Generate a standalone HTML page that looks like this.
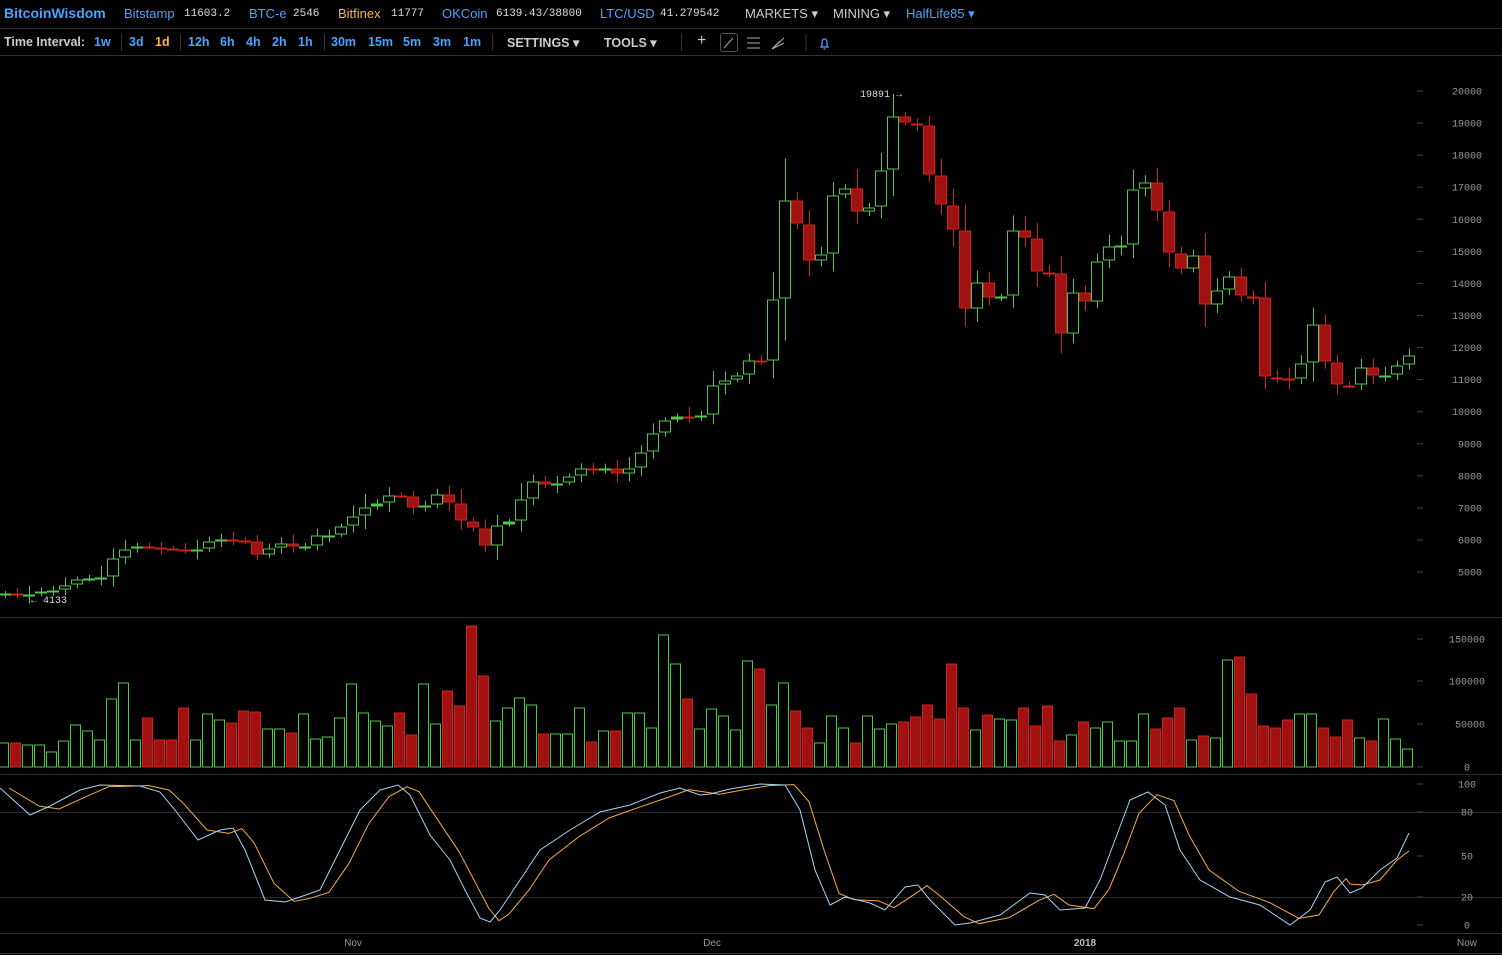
<!DOCTYPE html>
<html><head><meta charset="utf-8">
<style>
html,body{margin:0;padding:0;background:#000;width:1502px;height:955px;overflow:hidden;font-family:"Liberation Sans",sans-serif}
#top{position:absolute;left:0;top:0;width:1502px;height:28px;border-bottom:1px solid #333;font-size:13px;white-space:nowrap}
#top span{position:absolute;top:6px}
.b{color:#4aa3ff}.o{color:#ffb347}.w{color:#ccc}.m{font-family:"Liberation Mono",monospace;font-size:11px;color:#ddd;top:8px!important}
#bar{position:absolute;left:0;top:29px;width:1502px;height:26px;border-bottom:1px solid #333;font-size:12.5px;font-weight:bold;white-space:nowrap}
#bar span{position:absolute;top:6px}
.sep{position:absolute;top:5px;width:1px;height:17px;background:#333}
svg{position:absolute;left:0;top:0}
</style></head><body>
<div id="top">
<span class="b" style="left:4px;font-weight:bold;font-size:14px;top:5px">BitcoinWisdom</span>
<span class="b" style="left:124px">Bitstamp</span><span class="m" style="left:184px">11603.2</span>
<span class="b" style="left:249px">BTC-e</span><span class="m" style="left:293px">2546</span>
<span class="o" style="left:338px">Bitfinex</span><span class="m" style="left:391px">11777</span>
<span class="b" style="left:442px">OKCoin</span><span class="m" style="left:496px">6139.43/38800</span>
<span class="b" style="left:600px">LTC/USD</span><span class="m" style="left:660px">41.279542</span>
<span class="w" style="left:745px">MARKETS ▾</span>
<span class="w" style="left:833px">MINING ▾</span>
<span class="b" style="left:906px">HalfLife85 ▾</span>
</div>
<div id="bar">
<span class="w" style="left:4px">Time Interval:</span>
<span class="b" style="left:94px">1w</span><div class="sep" style="left:121px"></div>
<span class="b" style="left:129px">3d</span><span class="o" style="left:155px">1d</span><div class="sep" style="left:180px"></div>
<span class="b" style="left:188px">12h</span><span class="b" style="left:220px">6h</span><span class="b" style="left:246px">4h</span><span class="b" style="left:272px">2h</span><span class="b" style="left:298px">1h</span><div class="sep" style="left:324px"></div>
<span class="b" style="left:331px">30m</span><span class="b" style="left:368px">15m</span><span class="b" style="left:403px">5m</span><span class="b" style="left:433px">3m</span><span class="b" style="left:463px">1m</span><div class="sep" style="left:492px"></div>
<span class="w" style="left:507px">SETTINGS ▾</span>
<span class="w" style="left:604px">TOOLS ▾</span><div class="sep" style="left:681px"></div>
<span class="w" style="left:697px;font-weight:normal;font-size:16px;top:3px">+</span>
<div style="position:absolute;left:720px;top:4px;width:16px;height:17px;border:1px solid #555;border-radius:3px"></div>
<svg width="1502" height="27" style="top:0"><line x1="724" y1="19" x2="733" y2="9" stroke="#aaa"/><g stroke="#aaa"><line x1="747" y1="9" x2="760" y2="9"/><line x1="747" y1="14" x2="760" y2="14"/><line x1="747" y1="19" x2="760" y2="19"/><line x1="772" y1="20" x2="784" y2="9"/><line x1="772" y1="20" x2="784" y2="14"/><line x1="772" y1="20" x2="780" y2="12"/></g><line x1="806" y1="5" x2="806" y2="22" stroke="#333"/><path d="M820 18h9M822 18v-5a2.5 3 0 0 1 5 0v5M823.5 20h2" stroke="#4aa3ff" fill="none" stroke-width="1.3"/></svg>
</div>
<svg id="ch" width="1502" height="955"></svg>
<script>
(function(){
var ns="http://www.w3.org/2000/svg",s=document.getElementById('ch');
function el(t,a,txt){var e=document.createElementNS(ns,t);for(var k in a)e.setAttribute(k,a[k]);if(txt!=null)e.textContent=txt;s.appendChild(e);return e;}
[[617,"#333"],[774,"#333"],[933,"#333"],[953,"#333"]].forEach(function(l){el('line',{x1:0,x2:1502,y1:l[0]+.5,y2:l[0]+.5,stroke:l[1]});});
[812,897].forEach(function(y){el('line',{x1:0,x2:1502,y1:y+.5,y2:y+.5,stroke:"#2a2a2a"});});
var mono='"Liberation Mono",monospace';
for(var p=20000;p>=5000;p-=1000){var y=91+(20000-p)*0.03207;el('line',{x1:1417,x2:1423,y1:y,y2:y,stroke:"#444"});el('text',{x:1482,y:y+3.5,fill:"#999","font-size":10,"font-family":mono,"text-anchor":"end"},p);}
[[150000,639],[100000,681],[50000,724],[0,767]].forEach(function(v){el('line',{x1:1417,x2:1423,y1:v[1],y2:v[1],stroke:"#444"});el('text',{x:v[0]?1485:1470,y:v[1]+3.5,fill:"#999","font-size":10,"font-family":mono,"text-anchor":"end"},v[0]);});
[[100,784],[80,812],[50,856],[20,897],[0,925]].forEach(function(v){el('line',{x1:1417,x2:1423,y1:v[1],y2:v[1],stroke:"#444"});el('text',{x:1467,y:v[1]+3.5,fill:"#999","font-size":10,"font-family":mono,"text-anchor":"middle"},v[0]);});
[["Nov",353],["Dec",712],["2018",1085],["Now",1467]].forEach(function(d){el('text',{x:d[1],y:946,fill:d[0]=="2018"?"#bbb":"#999","font-size":10,"font-weight":d[0]=="2018"?"bold":"normal","font-family":"Liberation Sans,sans-serif","text-anchor":"middle"},d[0]);});
var C=[593,595,594,591,590,585,579,578,577,558,549,546,547,548,549,550,549,541,539,540,541,555,548,543,547,546,535,535,526,516,507,503,495,496,508,505,494,503,521,528,546,525,521,499,481,485,483,476,468,471,468,474,468,452,433,420,416,417,415,385,380,375,360,361,299,200,224,261,254,195,188,212,207,170,116,123,125,175,205,230,309,282,298,296,230,238,272,273,334,292,302,261,246,245,189,182,211,253,269,255,305,290,276,296,297,377,378,379,363,324,362,385,385,367,376,375,365,355];
var V=[743,743,745,745,752,741,725,731,740,699,683,740,718,740,740,708,740,714,720,723,711,712,729,729,733,714,739,737,718,684,713,721,726,713,735,684,724,691,706,626,676,721,708,698,705,734,734,734,708,742,731,731,713,713,728,635,664,699,729,709,716,730,661,669,705,683,711,728,743,716,728,743,716,729,724,722,717,705,719,664,708,730,715,719,720,708,726,706,741,735,722,728,722,741,741,714,729,718,708,740,736,738,660,657,694,726,728,720,714,714,728,737,720,738,741,719,739,749];
var G="#4fc84a",R="#a01212",RS="#d02020";
var o=596;
for(var i=0;i<C.length;i++){var x=5+12*i,c=C[i],up=c<o;if(Math.abs(c-o)<1)up=(i%3!=1);
 var tp=Math.min(o,c),bt=Math.max(o,c),rng=Math.max(4,(bt-tp)*0.35+((i*37)%11));
 var hi=tp-rng*(0.5+((i*13)%7)/10),lo=bt+rng*(0.4+((i*17)%7)/10);
 if(i==74)hi=94;
 var col=up?G:RS;
 el('line',{x1:x+.5,x2:x+.5,y1:hi,y2:lo,stroke:col});
 var h=Math.max(1,bt-tp-2);
 if(up)el('rect',{x:x-5.5,y:tp+1,width:11,height:h,fill:h<3?G:"#000",stroke:G});
 else el('rect',{x:x-5.5,y:tp+1,width:11,height:h,fill:R,stroke:RS});
 if(i<V.length){var vt=V[i];el('rect',{x:x-6.5,y:vt,width:10,height:767-vt,fill:up?"#000":R,stroke:up?G:RS});}
 o=c;}
el('text',{x:860,y:97,fill:"#ddd","font-size":10,"font-family":mono},"19891 →");
el('text',{x:31,y:603,fill:"#ddd","font-size":10,"font-family":mono},"← 4133");
var K=[[0,788],[30,815],[50,806],[80,790],[100,785],[140,786],[160,792],[175,810],[198,840],[220,830],[233,828],[245,850],[265,900],[285,902],[300,897],[320,890],[340,850],[360,810],[380,790],[398,785],[410,795],[430,835],[450,860],[465,890],[480,918],[490,922],[500,910],[520,880],[540,850],[570,830],[600,812],[630,805],[660,793],[680,788],[700,795],[710,794],[730,789],[760,784],[785,785],[800,810],[815,870],[830,905],[845,897],[870,903],[885,910],[905,887],[918,885],[930,900],[955,925],[970,923],[1000,915],[1030,893],[1045,895],[1060,910],[1085,908],[1100,880],[1115,840],[1130,800],[1148,792],[1165,805],[1180,850],[1200,880],[1230,897],[1260,905],[1290,925],[1310,910],[1325,882],[1337,877],[1350,893],[1362,888],[1380,870],[1397,858],[1409,833]];
var D=K.map(function(p,j){var q=K[Math.max(0,j-1)];return [Math.min(1409,p[0]+9),(p[1]*2+q[1])/3];});D[D.length-1]=[1409,851];D[D.length-2]=[1397,860];D[D.length-3]=[1380,880];D[D.length-4]=[1362,885];D[D.length-5]=[1350,884];
function pl(a,c){el('polyline',{points:a.map(function(p){return p.join(',')}).join(' '),fill:"none",stroke:c,"stroke-width":1});}
pl(D,"#f5a94a");pl(K,"#a8d4f0");
})();
</script>
</body></html>
